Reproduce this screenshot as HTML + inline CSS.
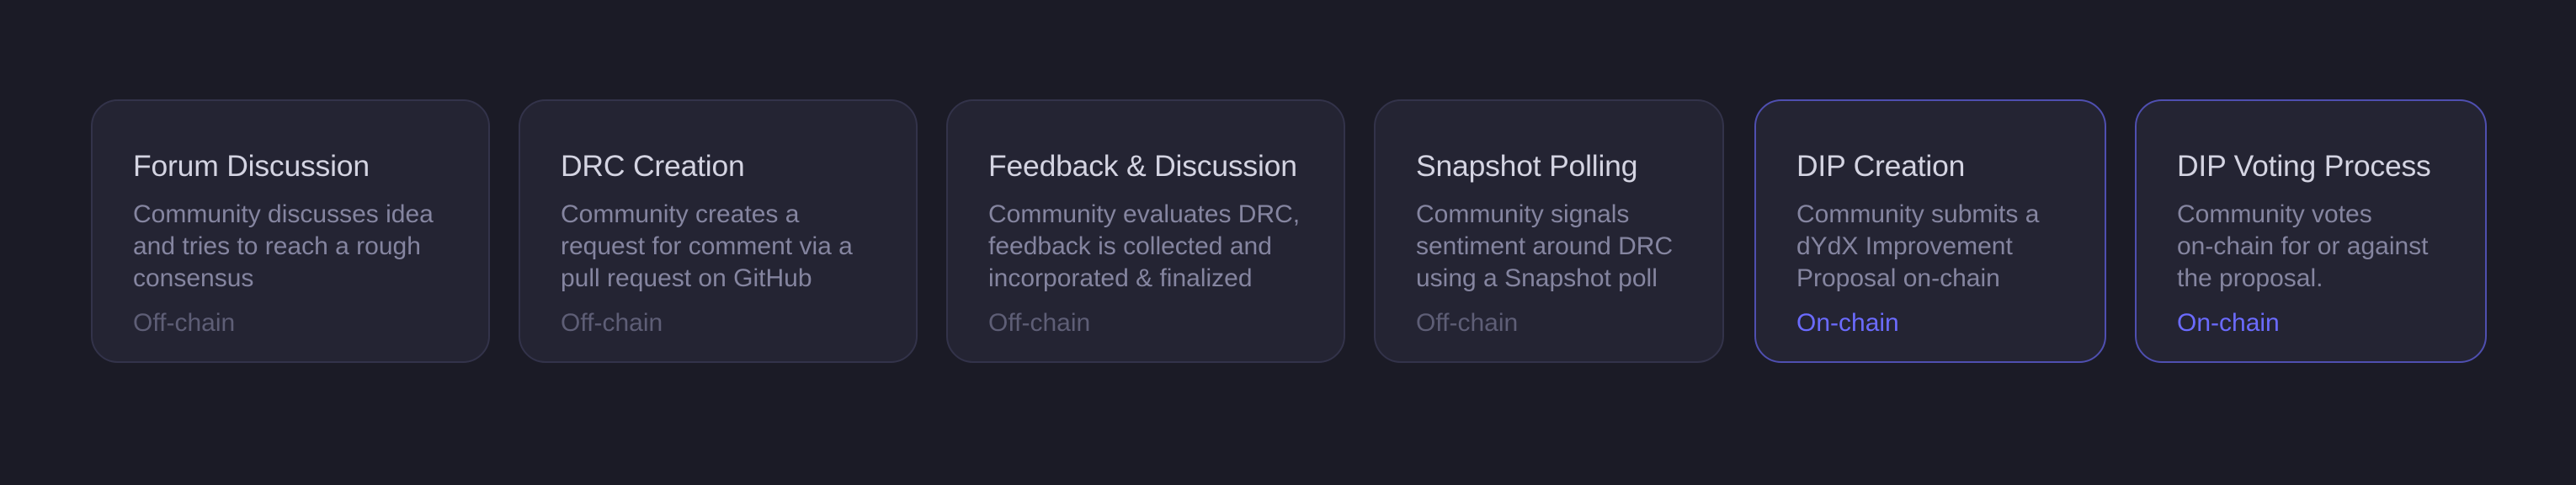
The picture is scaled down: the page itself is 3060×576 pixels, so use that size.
<!DOCTYPE html>
<html><head><meta charset="utf-8"><style>
html,body{margin:0;padding:0}
body{width:3060px;height:576px;background:#1b1b26;font-family:"Liberation Sans",sans-serif;position:relative;overflow:hidden}
.c{position:absolute;top:118px;height:313px;box-sizing:border-box;background:#242433;border:2px solid #33334a;border-radius:32px;padding:0 0 0 48px}
.c.on{border-color:#4f4fb0}
.t{position:absolute;top:57px;left:48px;font-size:35.5px;color:#d4d4e2;white-space:nowrap;letter-spacing:-0.2px}
.d{position:absolute;top:116px;left:48px;font-size:30px;line-height:38px;color:#8585a0;white-space:nowrap}
.s{position:absolute;top:247px;left:48px;font-size:30px;color:#5e5e76}
.on .s{color:#6b6bff}
</style></head><body>
<div class="c" style="left:108px;width:474px"><div class="t">Forum Discussion</div><div class="d">Community discusses idea<br>and tries to reach a rough<br>consensus</div><div class="s">Off-chain</div></div>
<div class="c" style="left:616px;width:474px"><div class="t">DRC Creation</div><div class="d">Community creates a<br>request for comment via a<br>pull request on GitHub</div><div class="s">Off-chain</div></div>
<div class="c" style="left:1124px;width:474px"><div class="t">Feedback &amp; Discussion</div><div class="d">Community evaluates DRC,<br>feedback is collected and<br>incorporated &amp; finalized</div><div class="s">Off-chain</div></div>
<div class="c" style="left:1632px;width:416px"><div class="t">Snapshot Polling</div><div class="d">Community signals<br>sentiment around DRC<br>using a Snapshot poll</div><div class="s">Off-chain</div></div>
<div class="c on" style="left:2084px;width:418px"><div class="t">DIP Creation</div><div class="d">Community submits a<br>dYdX Improvement<br>Proposal on-chain</div><div class="s">On-chain</div></div>
<div class="c on" style="left:2536px;width:418px"><div class="t">DIP Voting Process</div><div class="d">Community votes<br>on-chain for or against<br>the proposal.</div><div class="s">On-chain</div></div>
</body></html>
